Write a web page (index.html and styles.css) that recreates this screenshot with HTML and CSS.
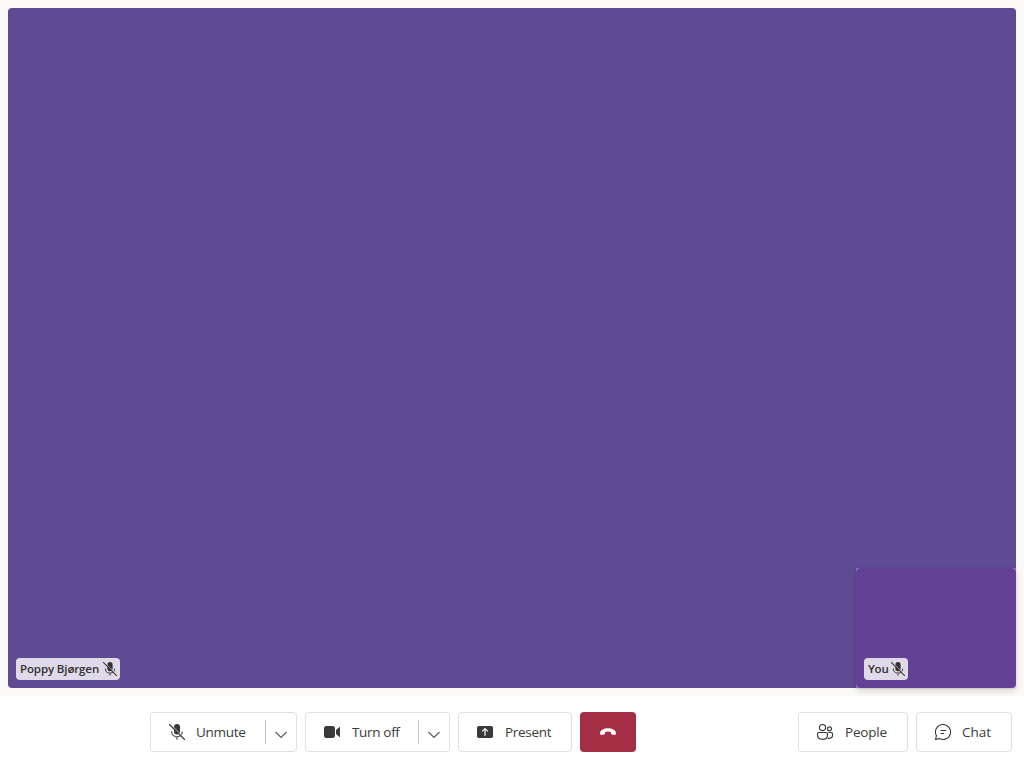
FILE: index.html
```html
<!DOCTYPE html>
<html lang="en">
<head>
<meta charset="utf-8">
<title>Call</title>
<link rel="stylesheet" href="styles.css">
</head>
<body>
<svg class="defs" aria-hidden="true">
  <symbol id="mic-off" viewBox="0 0 16 16">
    <rect x="5" y="0" width="6" height="10.5" rx="3" fill="currentColor"/>
    <path d="M2.7 7.5v.5c0 2.7 2.2 4.7 5.3 4.7s5.3-2 5.3-4.7v-.5M8 12.7v3" fill="none" stroke="currentColor" stroke-width="1.3" opacity=".8"/>
    <path d="M1.2-.1 16.5 15.2" stroke="#fff" stroke-width=".8"/>
    <path d="M.4.4 15.6 15.6" stroke="currentColor" stroke-width="1.25" stroke-linecap="round"/>
  </symbol>
  <symbol id="chevron" viewBox="0 0 12 8"><path d="M.5 1 6 6.5 11.5 1" fill="none" stroke="currentColor" stroke-width="1.2"/></symbol>
</svg>
<main class="stage">
  <section class="remote">
    <div class="label"><span class="remote-name">Poppy Bjørgen</span><svg class="label-icon"><use href="#mic-off"/></svg></div>
    <section class="local">
      <div class="local-video">
        <div class="label"><span class="local-name">You</span><svg class="label-icon"><use href="#mic-off"/></svg></div>
      </div>
    </section>
  </section>
</main>
<footer class="controls">
  <div class="center">
    <div class="split mic">
      <button class="action"><svg class="icon"><use href="#mic-off"/></svg><span class="t-unmute">Unmute</span></button>
      <button class="more" aria-label="Microphone options"><svg class="chevron"><use href="#chevron"/></svg></button>
    </div>
    <div class="split camera">
      <button class="action"><svg class="icon" viewBox="0 0 16 16"><rect x="0" y="2" width="11" height="12" rx="2.3" fill="currentColor"/><path d="M12 6 15.2 3.3q.8-.5.8.4v8.6q0 .9-.8.4L12 10z" fill="currentColor"/></svg><span class="t-off">Turn off</span></button>
      <button class="more" aria-label="Camera options"><svg class="chevron"><use href="#chevron"/></svg></button>
    </div>
    <button class="single present"><svg class="icon" viewBox="0 0 16 16"><rect x="0" y="2" width="16" height="12" rx="1.8" fill="currentColor"/><path d="M8 11.8V4.8M5.2 7.3 8 4.5l2.8 2.8" fill="none" stroke="#fff" stroke-width="1.2"/></svg><span class="t-present">Present</span></button>
    <button class="hangup" aria-label="Leave"><svg class="icon" viewBox="0 0 16 16"><path d="M0 9.1C.3 5.9 3.9 4.3 8 4.3s7.7 1.6 8 4.8c.1 1.4-.6 2.1-1.8 1.9l-2-.4c-.9-.2-1.2-.7-1.2-1.6V7.9Q8 7.1 5 7.9V9c0 .9-.3 1.4-1.2 1.6l-2 .4C.6 11.2-.1 10.5 0 9.1z" fill="currentColor"/></svg></button>
  </div>
  <div class="side">
    <button class="single people"><svg class="icon" viewBox="0 0 16 16" fill="none" stroke="currentColor" stroke-width="1.2"><circle cx="5.5" cy="3.6" r="3.1"/><circle cx="12.5" cy="4.8" r="2"/><path d="M2 8.5h7q1.5 0 1.5 1.5v1.2c0 2.6-1.9 4.1-5 4.1s-5-1.5-5-4.1V10q0-1.5 1.5-1.5zM11.3 8.5H14q1.5 0 1.5 1.5v1.3c0 2.3-1.7 3.4-4.8 3"/></svg><span class="t-people">People</span></button>
    <button class="single chat"><svg class="icon" viewBox="0 0 16 16" fill="none" stroke="currentColor" stroke-width="1.1"><path d="M8 .5a7.5 7.5 0 1 1-3.5 14.1L.6 15.4l.8-3.8A7.5 7.5 0 0 1 8 .5z"/><path d="M5.5 6.5h5.6M5.5 9.5h3.6"/></svg><span class="t-chat">Chat</span></button>
  </div>
</footer>
</body>
</html>
```
FILE: styles.css
```css
* { box-sizing: border-box; }
body {
  margin: 0;
  width: 1024px;
  height: 768px;
  overflow: hidden;
  display: flex;
  flex-direction: column;
  background: #fff;
  color: #3b3a39;
  font-family: "Open Sans", "Noto Sans", sans-serif;
}
.defs { position: absolute; width: 0; height: 0; }
svg { display: block; flex: none; }
.stage { height: 696px; padding: 8px; background: #faf9f8; }
.remote {
  position: relative;
  height: 680px;
  border-radius: 4px;
  background: #5f4a94;
  display: flex;
  align-items: flex-end;
  padding: 8px;
}
.local {
  position: absolute;
  right: 0;
  bottom: 0;
  width: 160px;
  height: 120px;
  border-radius: 3px;
  background: #faf9f8;
  box-shadow: 0 3px 7px rgba(0,0,0,.13), 0 1px 2px rgba(0,0,0,.11);
}
.local-video {
  height: 100%;
  padding: 8px;
  display: flex;
  align-items: flex-end;
  border-radius: 4px;
  background: #634296;
}
.label {
  height: 22px;
  padding: 0 3px 0 4px;
  display: flex;
  align-items: center;
  gap: 3px;
  border-radius: 4px;
  background: #dfd9e9;
  color: #323130;
  font-size: 11.5px;
  line-height: 20px;
  font-weight: 600;
  white-space: nowrap;
}
.remote-name { width: 80px; letter-spacing: -.12px; }
.local-name { width: 20px; letter-spacing: -.2px; }
.label-icon { width: 14px; height: 14px; }
.controls {
  height: 72px;
  padding: 0 12px 0 150px;
  display: flex;
  align-items: center;
  justify-content: space-between;
}
.center, .side { display: flex; gap: 8px; }
button {
  margin: 0;
  padding: 0;
  border: 0;
  background: none;
  color: inherit;
  font: 400 13.5px/20px "Open Sans", "Noto Sans", sans-serif;
  display: flex;
  align-items: center;
  white-space: nowrap;
}
.t-unmute { letter-spacing: -.3px; }
.t-off { letter-spacing: -.33px; }
.t-present { letter-spacing: -.3px; }
.t-people { letter-spacing: -.2px; }
.icon { width: 16px; height: 16px; }
.split, .single {
  height: 40px;
  border: 1px solid #e1dfdd;
  border-radius: 4px;
  background: #fff;
}
.split { display: flex; align-items: center; }
.action { height: 24px; padding-left: 18px; gap: 11px; border-right: 1px solid #c8c6c4; }
.more { flex: 1; height: 38px; justify-content: center; color: #605e5c; }
.chevron { width: 12px; height: 8px; margin-top: 5px; }
.mic { width: 147px; }
.mic .action { width: 115px; }
.camera { width: 145px; }
.camera .action { width: 113px; gap: 12px; }
.single { padding-left: 18px; gap: 12px; }
.present { width: 114px; }
.people { width: 110px; }
.chat { width: 96px; gap: 11px; }
.hangup { width: 56px; height: 40px; justify-content: center; border-radius: 4px; background: #a42e43; color: #fff; }
```
